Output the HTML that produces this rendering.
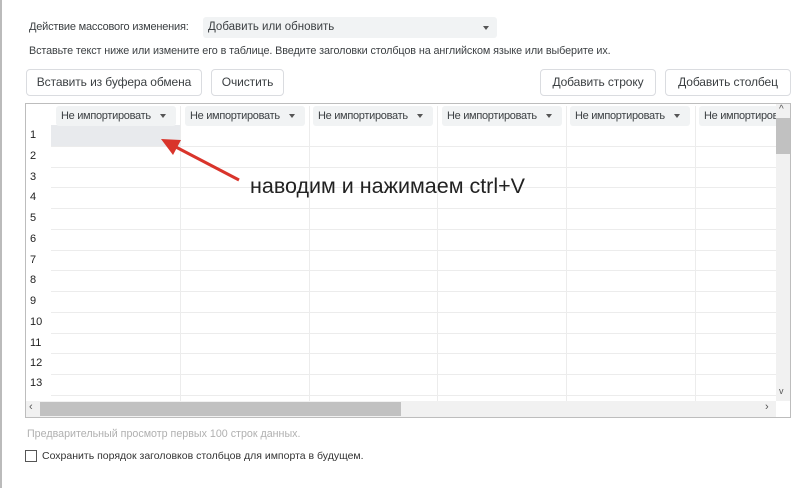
<!DOCTYPE html>
<html><head><meta charset="utf-8"><style>
*{margin:0;padding:0;box-sizing:border-box}
body{width:807px;height:488px;background:#fff;position:relative;overflow:hidden;font-family:"Liberation Sans",sans-serif;color:#3c4043}
.a{position:absolute;white-space:nowrap}
.btn{position:absolute;height:27px;border:1px solid #dadce0;border-radius:4px;font-size:12px;line-height:25px;text-align:center;color:#3c4043;background:#fff;letter-spacing:-0.1px}
.hd{position:absolute;top:106px;height:20px;background:#f1f3f4;border-radius:3px;font-size:11px;letter-spacing:-0.3px;line-height:20px;padding-left:5px;color:#3c4043;overflow:hidden;white-space:nowrap}
.hd i{position:absolute;right:10px;top:8px;border-left:3px solid transparent;border-right:3px solid transparent;border-top:4px solid #555}
.rn{position:absolute;left:30px;font-size:11px;color:#222}
.hl{position:absolute;left:51px;width:725px;height:1px;background:#ececec}
.vl{position:absolute;top:106px;width:1px;height:295px;background:#ececec}
</style></head><body>
<div class="a" style="left:0;top:0;width:2px;height:488px;background:#bbb"></div>
<div class="a" style="left:29px;top:21px;font-size:11px;letter-spacing:-0.2px">Действие массового изменения:</div>
<div class="a" style="left:203px;top:17px;width:294px;height:21px;background:#f1f3f4;border-radius:3px;font-size:11.5px;line-height:21px;padding-left:5px">Добавить или обновить<i style="position:absolute;right:8px;top:9px;border-left:3px solid transparent;border-right:3px solid transparent;border-top:4px solid #555"></i></div>
<div class="a" style="left:29px;top:45px;font-size:10.8px;letter-spacing:-0.1px">Вставьте текст ниже или измените его в таблице. Введите заголовки столбцов на английском языке или выберите их.</div>
<div class="btn" style="left:26px;top:69px;width:176px">Вставить из буфера обмена</div>
<div class="btn" style="left:211px;top:69px;width:73px">Очистить</div>
<div class="btn" style="left:540px;top:69px;width:116px">Добавить строку</div>
<div class="btn" style="left:665px;top:69px;width:126px">Добавить столбец</div>
<div class="a" style="left:25px;top:103px;width:766px;height:315px;border:1px solid #bdbdbd"></div>
<div class="a" style="left:51px;top:125px;width:129px;height:21px;background:#e8eaed"></div>
<div class="hd" style="left:56px;width:120px">Не импортировать<i></i></div>
<div class="hd" style="left:185px;width:120px">Не импортировать<i></i></div>
<div class="hd" style="left:313px;width:120px">Не импортировать<i></i></div>
<div class="hd" style="left:442px;width:120px">Не импортировать<i></i></div>
<div class="hd" style="left:570px;width:120px">Не импортировать<i></i></div>
<div class="hd" style="left:699px;width:77px;border-radius:3px 0 0 3px">Не импортировать</div>
<div class="vl" style="left:180px"></div><div class="vl" style="left:309px"></div><div class="vl" style="left:437px"></div><div class="vl" style="left:566px"></div><div class="vl" style="left:695px"></div>
<div class="hl" style="top:146px"></div><div class="hl" style="top:167px"></div><div class="hl" style="top:187px"></div><div class="hl" style="top:208px"></div><div class="hl" style="top:229px"></div><div class="hl" style="top:250px"></div><div class="hl" style="top:270px"></div><div class="hl" style="top:291px"></div><div class="hl" style="top:312px"></div><div class="hl" style="top:333px"></div><div class="hl" style="top:353px"></div><div class="hl" style="top:374px"></div><div class="hl" style="top:395px"></div>
<div class="rn" style="top:129px">1</div><div class="rn" style="top:150px">2</div><div class="rn" style="top:171px">3</div><div class="rn" style="top:191px">4</div><div class="rn" style="top:212px">5</div><div class="rn" style="top:233px">6</div><div class="rn" style="top:254px">7</div><div class="rn" style="top:274px">8</div><div class="rn" style="top:295px">9</div><div class="rn" style="top:316px">10</div><div class="rn" style="top:337px">11</div><div class="rn" style="top:357px">12</div><div class="rn" style="top:377px">13</div>
<div class="a" style="left:776px;top:104px;width:14px;height:297px;background:#f1f1f1"></div>
<div class="a" style="left:776px;top:118px;width:14px;height:36px;background:#c1c1c1"></div>
<div class="a" style="left:779px;top:104px;font-size:10px;color:#555">^</div>
<div class="a" style="left:779px;top:386px;font-size:9px;color:#555">v</div>
<div class="a" style="left:26px;top:401px;width:750px;height:16px;background:#f1f1f1"></div>
<div class="a" style="left:40px;top:402px;width:361px;height:14px;background:#c1c1c1"></div>
<div class="a" style="left:29px;top:401px;font-size:11px;color:#555">‹</div>
<div class="a" style="left:765px;top:401px;font-size:11px;color:#555">›</div>
<svg class="a" style="left:0;top:0" width="807" height="488"><line x1="239" y1="180" x2="172" y2="145" stroke="#d9342b" stroke-width="3"/><polygon points="161,139 181,140 173,155" fill="#d9342b"/></svg>
<div class="a" style="left:250px;top:174px;font-size:21.5px;color:#222">наводим и нажимаем ctrl+V</div>
<div class="a" style="left:27px;top:428px;font-size:10.7px;color:#b0b0b0">Предварительный просмотр первых 100 строк данных.</div>
<div class="a" style="left:25px;top:450px;width:12px;height:12px;border:1px solid #555"></div>
<div class="a" style="left:42px;top:450px;font-size:10.5px;color:#333">Сохранить порядок заголовков столбцов для импорта в будущем.</div>
</body></html>
